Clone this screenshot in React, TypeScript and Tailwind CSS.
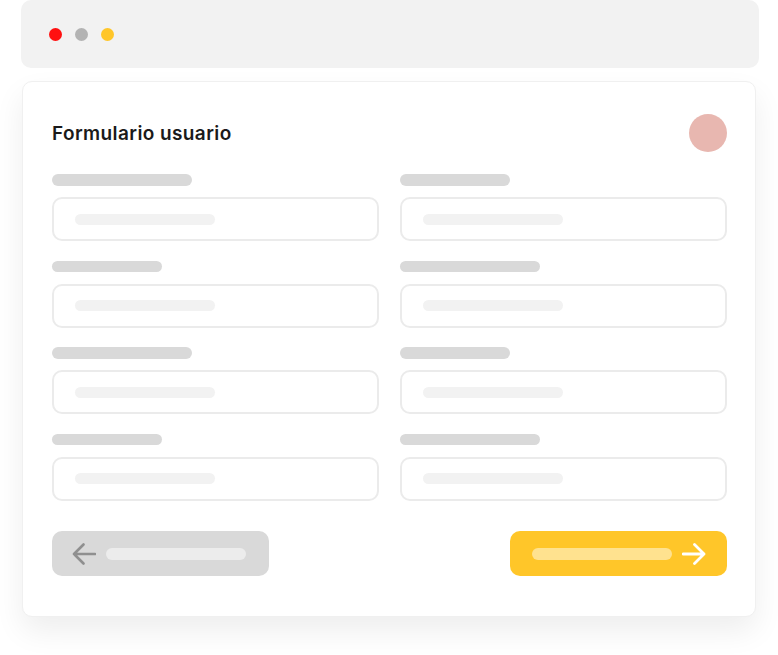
import React from 'react';

const leftLabels = [140, 110, 140, 110];
const rightLabels = [110, 140, 110, 140];

const Field: React.FC<{ labelWidth: number }> = ({ labelWidth }) => {
  return (
    <div className="flex flex-col">
      <div
        className="h-[11.5px] rounded-full bg-[#d9d9d9]"
        style={{ width: labelWidth }}
      />
      <div className="mt-[11.5px] h-[44px] rounded-[10px] border-2 border-[#ebebeb] flex items-center pl-[21px]">
        <div className="w-[140px] h-[11px] rounded-full bg-[#f2f2f2]" />
      </div>
    </div>
  );
};

const App: React.FC = () => {
  // rows alternate left / right so the grid fills in order
  const fields: number[] = [];
  leftLabels.forEach((w, i) => {
    fields.push(w);
    fields.push(rightLabels[i]);
  });

  return (
    <div className="w-[778px] h-[655px] bg-white overflow-hidden font-['Inter',sans-serif]">
      {/* window bar */}
      <div className="ml-[21px] w-[738px] h-[68px] rounded-[10px] bg-[#f2f2f2] flex items-center pl-[28px] gap-[13px]">
        <span className="w-[13px] h-[13px] rounded-full bg-[#ff1010]" />
        <span className="w-[13px] h-[13px] rounded-full bg-[#b3b3b3]" />
        <span className="w-[13px] h-[13px] rounded-full bg-[#ffc629]" />
      </div>

      {/* form card */}
      <div className="mt-[13px] ml-[22px] w-[734px] h-[536px] rounded-[10px] border border-[#f0f0f0] bg-white shadow-[0_14px_30px_rgba(0,0,0,0.07)] pt-[32px] pl-[29px] pr-[28px]">
        <div className="flex items-center justify-between h-[38px]">
          <h1 className="text-[19px] font-semibold text-[#1a1a1a] tracking-[0.4px] leading-none">
            Formulario usuario
          </h1>
          <div className="w-[38px] h-[38px] rounded-full bg-[#e8b7b0]" />
        </div>

        <div className="mt-[22px] grid grid-cols-2 gap-x-[21px] gap-y-[19.5px]">
          {fields.map((w, i) => (
            <Field key={i} labelWidth={w} />
          ))}
        </div>

        <div className="mt-[30.5px] flex justify-between">
          <button className="w-[217px] h-[45px] rounded-[10px] bg-[#d9d9d9] flex items-center pl-[20px] gap-[10px]">
            <svg width="24" height="22" viewBox="0 0 24 22" fill="none">
              <path
                d="M23 11H2M11.5 1.5L2 11l9.5 9.5"
                stroke="#8f8f8f"
                strokeWidth="2.6"
                strokeLinecap="round"
                strokeLinejoin="round"
              />
            </svg>
            <span className="w-[140px] h-[12px] rounded-full bg-[#ececec]" />
          </button>
          <button className="w-[217px] h-[45px] rounded-[10px] bg-[#ffc629] flex items-center pl-[22px] gap-[10px]">
            <span className="w-[140px] h-[12px] rounded-full bg-[#ffe28f]" />
            <svg width="24" height="22" viewBox="0 0 24 22" fill="none">
              <path
                d="M1 11h21M12.5 1.5L22 11l-9.5 9.5"
                stroke="#ffffff"
                strokeWidth="2.8"
                strokeLinecap="round"
                strokeLinejoin="round"
              />
            </svg>
          </button>
        </div>
      </div>
    </div>
  );
};

export default App;
